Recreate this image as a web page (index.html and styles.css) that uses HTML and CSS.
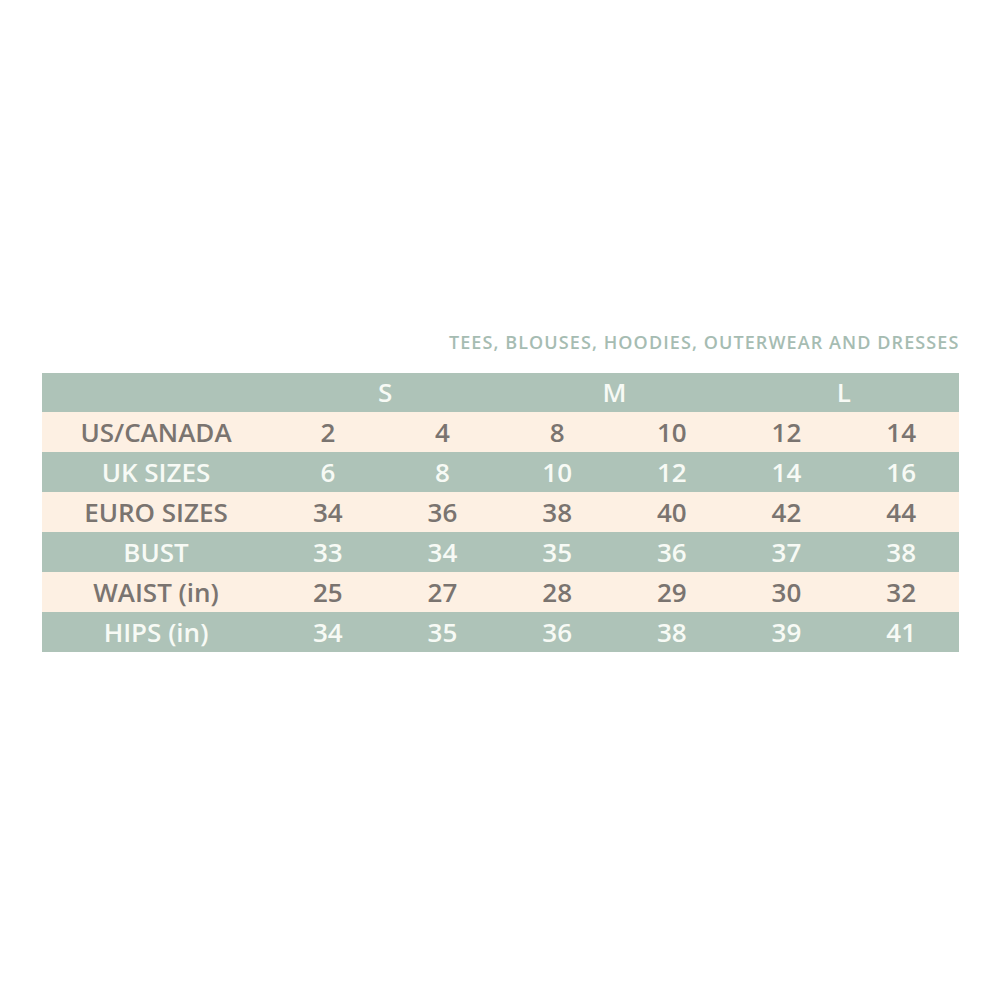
FILE: index.html
```html
<!DOCTYPE html>
<html>
<head>
<meta charset="utf-8">
<link rel="stylesheet" href="styles.css">
</head>
<body>
<div class="page">
  <div class="chart">
    <div class="title">TEES, BLOUSES, HOODIES, OUTERWEAR AND DRESSES</div>
    <table class="sizes">
      <colgroup><col class="c-label"><col><col><col><col><col><col></colgroup>
      <tr class="green head"><td></td><td colspan="2">S</td><td colspan="2">M</td><td colspan="2">L</td></tr>
      <tr class="cream"><td>US/CANADA</td><td>2</td><td>4</td><td>8</td><td>10</td><td>12</td><td>14</td></tr>
      <tr class="green"><td>UK SIZES</td><td>6</td><td>8</td><td>10</td><td>12</td><td>14</td><td>16</td></tr>
      <tr class="cream"><td>EURO SIZES</td><td>34</td><td>36</td><td>38</td><td>40</td><td>42</td><td>44</td></tr>
      <tr class="green"><td>BUST</td><td>33</td><td>34</td><td>35</td><td>36</td><td>37</td><td>38</td></tr>
      <tr class="cream"><td>WAIST (in)</td><td>25</td><td>27</td><td>28</td><td>29</td><td>30</td><td>32</td></tr>
      <tr class="green"><td>HIPS (in)</td><td>34</td><td>35</td><td>36</td><td>38</td><td>39</td><td>41</td></tr>
    </table>
  </div>
</div>
</body>
</html>
```
FILE: styles.css
```css
html, body {
  margin: 0;
  padding: 0;
  background: #ffffff;
}
.page {
  width: 1000px;
  height: 1000px;
  display: flex;
  justify-content: center;
  padding-top: 330px;
  box-sizing: border-box;
}
.chart {
  width: 917px;
  display: flex;
  flex-direction: column;
}
.title {
  font-family: "Open Sans", sans-serif;
  font-weight: 600;
  font-size: 18px;
  color: #a6bcb2;
  text-align: right;
  line-height: 24px;
  margin-bottom: 19px;
  letter-spacing: 1.1px;
  margin-right: -1px;
}
.sizes {
  width: 917px;
  border-collapse: collapse;
  table-layout: fixed;
  font-family: "Open Sans", sans-serif;
  font-weight: 600;
  font-size: 26px;
}
.c-label {
  width: 229px;
}
.sizes td {
  height: 40px;
  padding: 0;
  text-align: center;
  vertical-align: middle;
  line-height: 40px;
}
.green {
  background: #aec3b8;
  color: #f7faf5;
}
.cream {
  background: #fdf0e3;
  color: #7a7470;
}
.head td {
  height: 39px;
  line-height: 39px;
}
```
